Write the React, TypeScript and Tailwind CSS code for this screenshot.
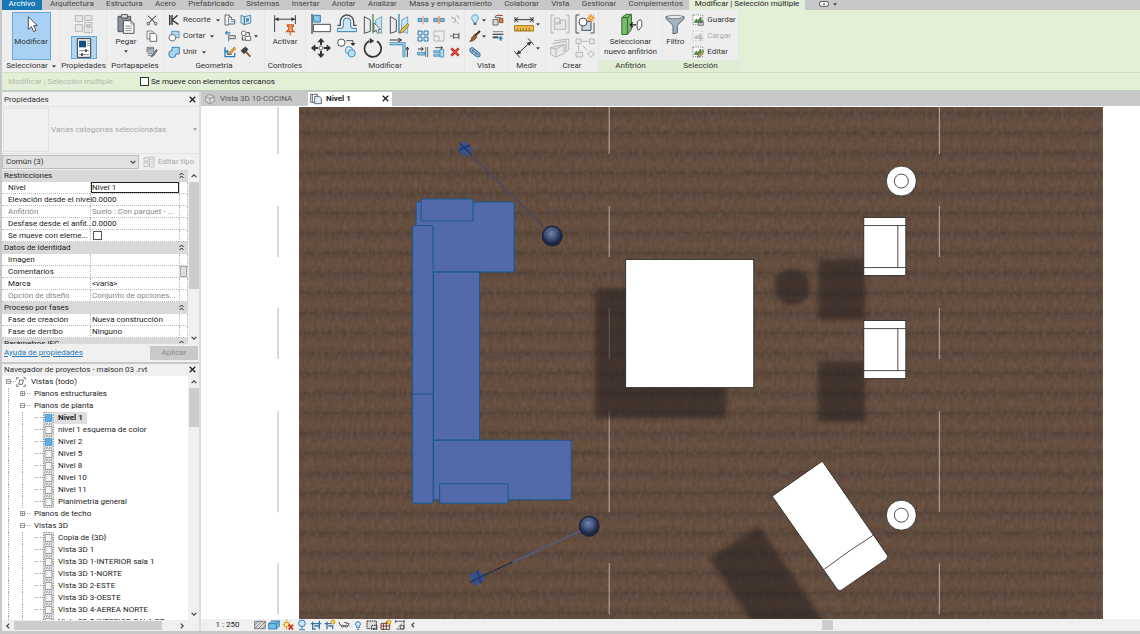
import type { ReactNode } from 'react';
import { clsx } from 'clsx';

interface IconProps {
  children: ReactNode;
  size?: 'sm' | 'lg' | 'xl';
  faded?: boolean;
}

// lg icons are drawn on a 60 grid, sm icons on a 36 grid
function Icon({ children, size = 'sm', faded }: IconProps) {
  return (
    <svg
      viewBox={size === 'sm' ? '0 0 36 36' : '0 0 60 60'}
      fill="none"
      stroke="#4b5157"
      strokeWidth="3"
      className={clsx(
        'shrink-0',
        size === 'sm' && 'w-3 h-3',
        size === 'lg' && 'w-5 h-5',
        size === 'xl' && 'w-6 h-6',
        faded && 'opacity-35 grayscale'
      )}
    >
      {children}
    </svg>
  );
}

function Caret() {
  return (
    <svg viewBox="0 0 10 6" className="w-1 h-[3px] shrink-0" fill="#444">
      <path d="M0 0h10L5 6z" />
    </svg>
  );
}

function CloseIcon() {
  return (
    <svg viewBox="0 0 10 10" className="w-[7px] h-[7px]" stroke="#222" strokeWidth="1.8">
      <path d="M1 1l8 8M9 1l-8 8" />
    </svg>
  );
}

function Chevron({ dir }: { dir: 'up' | 'down' | 'left' | 'right' }) {
  const paths = {
    up: 'M1 7l4-4 4 4',
    down: 'M1 3l4 4 4-4',
    left: 'M7 1L3 5l4 4',
    right: 'M3 1l4 4-4 4',
  };
  return (
    <svg viewBox="0 0 10 10" className="w-[6px] h-[6px]" fill="none" stroke="#444" strokeWidth="2">
      <path d={paths[dir]} />
    </svg>
  );
}

const icons = {
  cursor: (
    <Icon size="lg">
      <path d="M22 8v38l9-8 7 15 7-4-7-14h11z" fill="#fff" stroke="#333" strokeWidth="2.5" />
    </Icon>
  ),
  typeProps: (
    <Icon size="lg" faded>
      <path d="M4 5h22v18H4zM4 32h22v20H4zM32 5h22v14H32z" fill="#ddd" />
      <path d="M32 26h22v30H32z" fill="#fff" />
      <path d="M37 32h12v8H37z" fill="#999" />
      <path d="M37 46h12M37 51h12" strokeWidth="2" />
    </Icon>
  ),
  properties: (
    <Icon size="lg">
      <path d="M10 2h40v56H10z" fill="#fff" stroke="#333" />
      <path d="M15 8h21v20H15z" fill="#174f80" stroke="none" />
      <path d="M39 9h8M39 16h8M39 23h8M15 38h30M15 50h30" strokeWidth="2" />
      <path d="M36 34v8M24 46v8" stroke="#111" strokeWidth="4" />
    </Icon>
  ),
  paste: (
    <Icon size="lg">
      <path d="M6 7h38v46H6z" fill="#8d9299" stroke="#555b63" />
      <path d="M16 2h18v10H16z" fill="#e6e6e6" />
      <path d="M22 20h23l9 9v29H22z" fill="#fff" />
      <path d="M45 20v10h9M28 36h19M28 43h19M28 50h19" strokeWidth="2" />
    </Icon>
  ),
  cut: (
    <Icon>
      <path d="M6 5l21 21M30 5L9 26" stroke="#222" />
      <circle cx="7" cy="29" r="4" />
      <circle cx="29" cy="29" r="4" />
    </Icon>
  ),
  copyClip: (
    <Icon>
      <path d="M3 3h16l4 4v20H3z" fill="#eee" strokeWidth="2" />
      <path d="M12 10h14l6 6v18H12z" fill="#fff" strokeWidth="2.5" />
    </Icon>
  ),
  match: (
    <Icon>
      <path d="M3 4h20v14H3zM5 8h16M5 12h16M5 23h13M5 28h10" fill="#ddd" strokeWidth="2" />
      <path d="M32 10L19 25l-4 8 8-4 11-16z" fill="#5b86a9" strokeWidth="2" />
    </Icon>
  ),
  cope: (
    <Icon>
      <path d="M5 3v30M12 3v30M12 18L29 4M12 18l19 13" stroke="#333" strokeWidth="4" />
      <path d="M4 7h9M4 14h9M4 21h9M4 28h9" strokeWidth="2" />
    </Icon>
  ),
  cutGeom: (
    <Icon>
      <path d="M11 4h22v19H11z" fill="#b4daf0" stroke="#4a84ae" strokeWidth="2.5" />
      <circle cx="13" cy="23" r="10" fill="#fff" strokeWidth="2.5" />
    </Icon>
  ),
  joinGeom: (
    <Icon>
      <path d="M12 4h22v20H24a11 11 0 1 1-12-11z" fill="#a5d4ef" stroke="#28709e" strokeWidth="2.5" />
    </Icon>
  ),
  wallOpening: (
    <Icon>
      <path d="M3 3h13v6h6v8h10v13H14v3H3z" fill="#f7f7f7" strokeWidth="2.5" />
      <path d="M14 9v21" strokeWidth="2" />
      <path d="M20 23h14" stroke="#4d93c5" />
    </Icon>
  ),
  splitFace: (
    <Icon>
      <path d="M3 4l10 4v24L3 27zM13 8l19-4v23l-19 5z" fill="#d9eaf6" stroke="#39779f" strokeWidth="2.5" />
      <path d="M18 13l9-2v11l-9 4z" fill="#489bd1" stroke="none" />
    </Icon>
  ),
  beams: (
    <Icon>
      <path d="M14 17h20v9H14z" fill="#ddd" strokeWidth="2.5" />
      <path d="M3 7h16M8 2v10M3 12h16M14 26v8" stroke="#3c86b9" />
    </Icon>
  ),
  wallJoin: (
    <Icon>
      <circle cx="11" cy="10" r="7" fill="#fff" strokeWidth="2.5" />
      <path d="M16 19h16v12H16z" fill="#fff" strokeWidth="2.5" />
      <path d="M7 19v11h7M20 8h8v8" stroke="#222" strokeWidth="2.5" />
    </Icon>
  ),
  paint: (
    <Icon>
      <path d="M3 4v28h29V21M11 12v13h12M3 12l8 8" stroke="#277eb0" strokeWidth="4" />
      <path d="M31 3L16 19l-3 7 8-3L35 8z" fill="#e9a63c" stroke="#9a6415" strokeWidth="2" />
    </Icon>
  ),
  hammer: (
    <Icon>
      <path d="M17 17l14 15" stroke="#8b4a20" strokeWidth="5" />
      <path d="M3 14L16 3l8 7-12 13z" fill="#444" stroke="#222" strokeWidth="2" />
    </Icon>
  ),
  activate: (
    <Icon size="xl">
      <path d="M4 8v42M56 8v22M4 18h52" stroke="#444" strokeWidth="2.5" />
      <path d="M5 18l9-5v10zM55 18l-9-5v10z" fill="#333" stroke="none" />
      <path d="M36 32h15v4h-3v8l5 5H34l5-5v-8h-3z" fill="#f5a66d" stroke="#c95f25" />
      <path d="M43 49v9" stroke="#c95f25" />
    </Icon>
  ),
  align: (
    <Icon size="lg">
      <path d="M3 0v60" strokeWidth="4" />
      <path d="M7 4h21v20H7z" fill="#8dcaf0" stroke="#337fac" />
      <path d="M7 31h51v22H7z" fill="#fff" />
    </Icon>
  ),
  offset: (
    <Icon size="lg">
      <path d="M1 53h58V43H47q-6 0-6-7V23a11 11 0 0 0-22 0v13q0 7-6 7H1z" fill="#cfe7f5" stroke="#3781ad" strokeWidth="3" />
      <path d="M1 34h9V23a20 20 0 0 1 40 0v11h9" strokeWidth="4" />
    </Icon>
  ),
  mirrorPick: (
    <Icon size="lg">
      <path d="M4 8l18 10v34L4 58z" fill="#ededed" />
      <path d="M56 8L38 18v34l18 6z" fill="#c6e4f5" stroke="#79a7c2" />
      <path d="M30 0v58" stroke="#3c9342" strokeWidth="4" />
      <path d="M33 27v27l6-6 5 11 5-3-5-10h9z" fill="#fff" stroke="#333" strokeWidth="2" />
    </Icon>
  ),
  mirrorDraw: (
    <Icon size="lg">
      <path d="M4 8l18 10v34L4 58z" fill="#ededed" />
      <path d="M56 8L38 18v34l18 6z" fill="#c6e4f5" stroke="#79a7c2" />
      <path d="M30 0v58" stroke="#3789b8" strokeWidth="4" />
      <path d="M56 28L36 47l-4 11 11-4 17-20z" fill="#ebbd44" stroke="#6b5421" strokeWidth="2" />
    </Icon>
  ),
  move: (
    <Icon size="lg">
      <path d="M30 5v17M30 38v17M5 30h17M38 30h17" stroke="#333" strokeWidth="6" />
      <path d="M30 0l11 13H19zM30 60l11-13H19zM0 30l13-11v22zM60 30L47 19v22z" fill="#333" stroke="none" />
      <path d="M25 25h10v10H25z" fill="#fff" strokeWidth="2" />
    </Icon>
  ),
  copy: (
    <Icon size="lg">
      <circle cx="13" cy="14" r="11" fill="#fff" />
      <path d="M28 8h20v9" />
      <path d="M40 15h16l-8 9z" fill="#333" stroke="none" />
      <circle cx="36" cy="37" r="11" fill="#d9effb" stroke="#3f91c1" />
      <circle cx="44" cy="46" r="11" fill="#b7dff5" stroke="#3f91c1" />
    </Icon>
  ),
  rotate: (
    <Icon size="lg">
      <path d="M19 9a25 25 0 1 0 23 1" stroke="#333" strokeWidth="5" />
      <path d="M20 0v17l14-8z" fill="#333" stroke="none" />
    </Icon>
  ),
  trim: (
    <Icon size="lg">
      <path d="M2 6h35M27 0l11 6-11 6M55 57V28M49 36l6-9 6 9" stroke="#333" />
      <path d="M2 17h43v41" stroke="#3c87b6" strokeWidth="9" />
      <path d="M2 17h43v41" stroke="#a9d6ef" strokeWidth="4" />
    </Icon>
  ),
  splitElem: (
    <Icon>
      <path d="M3 13h11v10H3zM22 13h11v10H22z" fill="#79bce5" stroke="#33739d" strokeWidth="2" />
      <path d="M18 5v26" stroke="#d56430" strokeWidth="2" />
    </Icon>
  ),
  splitGap: (
    <Icon>
      <path d="M2 13h11v10H2zM23 13h11v10H23z" fill="#79bce5" stroke="#33739d" strokeWidth="2" />
      <path d="M16 7v22M20 7v22" stroke="#d56430" strokeWidth="2" />
    </Icon>
  ),
  unpin: (
    <Icon faded>
      <path d="M5 5l25 25M20 6h9v10M7 12h12v12h-8" />
    </Icon>
  ),
  array: (
    <Icon>
      <path d="M3 3h12v12H3zM21 3h12v12H21zM3 21h12v12H3zM21 21h12v12H21z" fill="#d6ecf8" stroke="#2d7ba9" />
    </Icon>
  ),
  scale: (
    <Icon faded>
      <path d="M3 3h30v30H3zM3 18h15v15" fill="#eee" />
    </Icon>
  ),
  pin: (
    <Icon>
      <path d="M3 18h11M14 9v18M14 13h14v10H14M30 8v20" strokeWidth="2.5" />
    </Icon>
  ),
  extend: (
    <Icon>
      <path d="M32 3v30M26 3v30" strokeWidth="2.5" />
      <path d="M3 9h15M13 4l6 5-6 5" stroke="#333" />
      <path d="M2 19h21v8H2z" fill="#8cc6e9" stroke="#3c87b6" strokeWidth="2.5" />
    </Icon>
  ),
  extendMulti: (
    <Icon>
      <path d="M2 14h18v6H2zM2 25h18v6H2z" fill="#83c0e5" stroke="#3c87b6" strokeWidth="2" />
      <path d="M21 10h11v23H21z" fill="#b9dcf0" stroke="#3c87b6" strokeWidth="2.5" />
      <path d="M6 5h22M23 1l6 4-6 4" />
    </Icon>
  ),
  remove: (
    <Icon>
      <path d="M7 7l22 22M29 7L7 29" stroke="#a02622" strokeWidth="8" />
      <path d="M8 8l20 20M28 8L8 28" stroke="#ef4d44" strokeWidth="4" />
    </Icon>
  ),
  bulb: (
    <Icon>
      <path d="M18 2a10 10 0 0 0-7 17l3 7h8l3-7a10 10 0 0 0-7-17z" fill="#c2e6fc" stroke="#448cb9" strokeWidth="2.5" />
      <path d="M14 30h8" strokeWidth="5" />
    </Icon>
  ),
  brush: (
    <Icon>
      <path d="M33 3L18 17" stroke="#3d3026" strokeWidth="6" />
      <path d="M17 13l7 8-6 7q-6 7-16 6 6-4 6-11z" fill="#9a5c2b" stroke="#5f371a" strokeWidth="2" />
    </Icon>
  ),
  chain: (
    <Icon>
      <path d="M3 8l7-4 23 18v9l-9 2L3 17z" fill="#8fbfdf" stroke="#285f8a" strokeWidth="2.5" />
      <path d="M8 11l22 16M14 7l-5 12M25 17l-5 12" strokeWidth="2" />
    </Icon>
  ),
  boxes: (
    <Icon>
      <path d="M3 17h15v16H3zM9 11h16v15" fill="#ddd" strokeWidth="2.5" />
      <path d="M22 13h11v13H22z" fill="#df7d3b" stroke="#713d23" strokeWidth="2" />
      <path d="M8 9q6-8 24-4" stroke="#713d23" />
    </Icon>
  ),
  linework: (
    <Icon>
      <path d="M2 5h32" strokeWidth="2" />
      <path d="M2 13h32" strokeWidth="4" />
      <path d="M2 22h17" strokeWidth="6" />
      <path d="M26 18v14M20 25h12" stroke="#3487c4" strokeWidth="5" />
    </Icon>
  ),
  measure: (
    <Icon size="lg">
      <path d="M3 17h54M3 9v16M57 9v16M13 10L4 17l9 7M47 10l9 7-9 7" stroke="#333" />
      <path d="M1 35h58v16H1z" fill="#f2bd43" stroke="#a3771b" />
      <path d="M10 42v9M19 42v9M28 42v9M37 42v9M46 42v9" strokeWidth="2" />
    </Icon>
  ),
  dimension: (
    <Icon size="lg">
      <path d="M9 49L51 11M1 40l17 19M42 1l17 19" stroke="#333" />
      <path d="M9 49l4-13 9 10zM51 11l-4 13-9-10z" fill="#333" stroke="none" />
    </Icon>
  ),
  group: (
    <Icon size="lg" faded>
      <path d="M12 3H3v54h9M48 3h9v54h-9M14 12h15v15H14zM31 18h16v28H14V30h17z" fill="#ddd" />
    </Icon>
  ),
  createGroup: (
    <Icon size="lg">
      <path d="M13 3H3v54h10M46 57h11V26" />
      <path d="M24 22h24v27H20z" fill="#cbd9e4" />
      <circle cx="24" cy="24" r="12" fill="#fff" />
      <path d="M48 0v25M36 12h24M39 4l18 17M57 4L39 21" stroke="#ed7b27" />
      <circle cx="48" cy="12" r="6" fill="#ffd64d" stroke="#e8922c" />
    </Icon>
  ),
  parts: (
    <Icon size="lg" faded>
      <path d="M14 8l42-5v32l-8 8M2 29l40-10v28L18 57 2 50zM2 29l16 5v23M18 34l24-15M8 17l40-8v34" fill="#ddd" />
    </Icon>
  ),
  assembly: (
    <Icon size="lg" faded>
      <path d="M3 3h15v14H3zM43 3h15v14H43zM3 43h20v14H3zM48 38l10 10-10 10-10-10zM22 10h17M11 20v19M23 23l15 15" fill="#ddd" />
    </Icon>
  ),
  host: (
    <Icon size="xl">
      <path d="M7 14l10-8h14v38L21 56H7z" fill="#7cbb6c" stroke="#316b2f" strokeWidth="2.5" />
      <path d="M7 14h14v42M21 14L31 6" stroke="#316b2f" strokeWidth="2.5" />
      <path d="M28 32h15M35 26l-7 6 7 6" stroke="#222" />
      <path d="M46 24l7-5q5 0 4 17l-7 9q-7 2-4-21z" fill="#fff" strokeWidth="2.5" />
    </Icon>
  ),
  filter: (
    <Icon size="lg">
      <path d="M3 8h54v6L37 34v22l-13 4V34L3 14z" fill="#a3b2bf" stroke="#536371" />
      <ellipse cx="30" cy="9" rx="25" ry="5" fill="#e5eaee" stroke="#536371" strokeWidth="2" />
    </Icon>
  ),
};

function SelectionIcon({ kind }: { kind: 'save' | 'load' | 'edit' }) {
  return (
    <Icon faded={kind === 'load'}>
      <path d="M3 3h29v29H3z" strokeDasharray="4 3" strokeWidth="2" fill="#fff" />
      <path d="M7 25l6-10 5 5 8-11 3 17z" fill="#4d9543" stroke="#31662c" strokeWidth="2" />
      {kind === 'save' && <path d="M19 21h15v13H19zM23 21v5h7v-5" fill="#ccc" strokeWidth="2" />}
      {kind === 'load' && <path d="M26 19v15M20 26h14" />}
      {kind === 'edit' && <path d="M34 13L19 27l-2 7 7-2 11-14z" fill="#edb248" strokeWidth="2" />}
    </Icon>
  );
}

const tabs = [
  'Arquitectura',
  'Estructura',
  'Acero',
  'Prefabricado',
  'Sistemas',
  'Insertar',
  'Anotar',
  'Analizar',
  'Masa y emplazamiento',
  'Colaborar',
  'Vista',
  'Gestionar',
  'Complementos',
];

function MenuTabs() {
  return (
    <nav className="flex h-[10px] bg-[#c8c8c8] text-[#444] leading-[7px]">
      <button className="w-10 pb-[3px] bg-[#1979b4] text-white">Archivo</button>
      <div className="flex w-[647px] justify-between pb-[3px] pl-2 pr-[6px]">
        {tabs.map((tab) => (
          <button key={tab}>{tab}</button>
        ))}
      </div>
      <button className="w-[116px] pb-[3px] bg-[#e4efd8] text-[#222]">Modificar | Selección múltiple</button>
      <button aria-label="Minimizar" className="flex items-center gap-1 h-2 pl-[14px]">
        <svg viewBox="0 0 30 18" className="w-[10px] h-[6px]" fill="#fff" stroke="#555" strokeWidth="3">
          <rect x="2" y="2" width="26" height="14" rx="4" />
          <path d="M15 6l4 5h-8z" fill="#333" stroke="none" />
        </svg>
        <Caret />
      </button>
    </nav>
  );
}

interface PanelProps {
  label: string;
  width: string;
  children: ReactNode;
  caret?: boolean;
  context?: boolean;
}

function Panel({ label, width, children, caret, context }: PanelProps) {
  return (
    <section className={clsx('flex flex-col shrink-0 border-r border-[#e6e6e6]', width)}>
      <div className="flex grow justify-center bg-[#eeeeee] pt-[2px]">{children}</div>
      <div
        className={clsx(
          'flex items-center justify-center gap-1 h-3 leading-3',
          context ? 'bg-[#e1ecd4]' : 'bg-[#eeeeee]'
        )}
      >
        {label}
        {caret && <Caret />}
      </div>
    </section>
  );
}

function ToolButton({ children, name }: { children: ReactNode; name: string }) {
  return (
    <button aria-label={name} className="flex items-center justify-center">
      {children}
    </button>
  );
}

function LabelButton({ icon, text, caret, disabled }: { icon: ReactNode; text: string; caret?: boolean; disabled?: boolean }) {
  return (
    <button disabled={disabled} className={clsx('flex items-center gap-[3px] h-4', disabled && 'text-[#aaa]')}>
      {icon}
      {text}
      {caret && <span className="pl-[2px]"><Caret /></span>}
    </button>
  );
}

function Ribbon() {
  return (
    <div className="flex h-[63px] bg-[#e4efd8] border-b border-[#d3dcc9] text-[#333] leading-[10px]">
      <Panel label="Seleccionar" width="w-[59px]" caret>
        <button className="flex flex-col items-center gap-[3px] w-[39px] h-12 pt-px bg-[#a9d1f3] border border-[#6ba6d5]">
          {icons.cursor}
          Modificar
        </button>
      </Panel>
      <Panel label="Propiedades" width="w-[46px]">
        <div className="flex flex-col items-center gap-[2px] pt-[2px]">
          <ToolButton name="Propiedades de tipo">{icons.typeProps}</ToolButton>
          <button aria-label="Propiedades" className="flex items-center justify-center w-[26px] h-[23px] bg-[#b0d5f3] border border-[#6ba6d5]">
            {icons.properties}
          </button>
        </div>
      </Panel>
      <Panel label="Portapapeles" width="w-[57px]">
        <div className="flex gap-[10px] pl-1">
          <button className="flex flex-col items-center gap-[3px] h-12 pt-[2px]">
            {icons.paste}
            Pegar
            <Caret />
          </button>
          <div className="grid grid-rows-3 h-12">
            <ToolButton name="Cortar al portapapeles">{icons.cut}</ToolButton>
            <ToolButton name="Copiar al portapapeles">{icons.copyClip}</ToolButton>
            <ToolButton name="Igualar propiedades">{icons.match}</ToolButton>
          </div>
        </div>
      </Panel>
      <Panel label="Geometría" width="w-[101px]">
        <div className="flex w-full pl-1">
          <div className="flex flex-col w-[54px]">
            <LabelButton icon={icons.cope} text="Recorte" caret />
            <LabelButton icon={icons.cutGeom} text="Cortar" caret />
            <LabelButton icon={icons.joinGeom} text="Unir" caret />
          </div>
          <div className="grid grid-cols-[16px_16px_8px] grid-rows-3 h-12 items-center">
            <ToolButton name="Abertura">{icons.wallOpening}</ToolButton>
            <ToolButton name="Dividir cara">{icons.splitFace}</ToolButton>
            <span />
            <ToolButton name="Uniones de viga">{icons.beams}</ToolButton>
            <ToolButton name="Uniones de muro">{icons.wallJoin}</ToolButton>
            <Caret />
            <ToolButton name="Pintura">{icons.paint}</ToolButton>
            <ToolButton name="Derribar">{icons.hammer}</ToolButton>
          </div>
        </div>
      </Panel>
      <Panel label="Controles" width="w-[41px]">
        <button className="flex flex-col items-center gap-px h-12">
          {icons.activate}
          Activar
        </button>
      </Panel>
      <Panel label="Modificar" width="w-[159px]">
        <div className="flex gap-[3px]">
          <div className="grid grid-cols-4 grid-rows-2 w-[104px] h-12">
            <ToolButton name="Alinear">{icons.align}</ToolButton>
            <ToolButton name="Desfase">{icons.offset}</ToolButton>
            <ToolButton name="Reflejar eje">{icons.mirrorPick}</ToolButton>
            <ToolButton name="Dibujar eje">{icons.mirrorDraw}</ToolButton>
            <ToolButton name="Mover">{icons.move}</ToolButton>
            <ToolButton name="Copiar">{icons.copy}</ToolButton>
            <ToolButton name="Rotar">{icons.rotate}</ToolButton>
            <ToolButton name="Recortar esquina">{icons.trim}</ToolButton>
          </div>
          <div className="grid grid-cols-3 grid-rows-3 w-12 h-12">
            <ToolButton name="Dividir">{icons.splitElem}</ToolButton>
            <ToolButton name="Dividir con hueco">{icons.splitGap}</ToolButton>
            <ToolButton name="Desbloquear">{icons.unpin}</ToolButton>
            <ToolButton name="Matriz">{icons.array}</ToolButton>
            <ToolButton name="Escala">{icons.scale}</ToolButton>
            <ToolButton name="Bloquear">{icons.pin}</ToolButton>
            <ToolButton name="Extender uno">{icons.extend}</ToolButton>
            <ToolButton name="Extender varios">{icons.extendMulti}</ToolButton>
            <ToolButton name="Borrar">{icons.remove}</ToolButton>
          </div>
        </div>
      </Panel>
      <Panel label="Vista" width="w-[43px]">
        <div className="grid grid-cols-[14px_9px_14px] grid-rows-3 h-12 items-center">
          <ToolButton name="Ocultar">{icons.bulb}</ToolButton>
          <Caret />
          <ToolButton name="Caja de sección">{icons.boxes}</ToolButton>
          <ToolButton name="Modificar gráficos">{icons.brush}</ToolButton>
          <Caret />
          <ToolButton name="Trabajo de líneas">{icons.linework}</ToolButton>
          <ToolButton name="Desplazar">{icons.chain}</ToolButton>
        </div>
      </Panel>
      <Panel label="Medir" width="w-[38px]">
        <div className="grid grid-cols-[24px_6px] grid-rows-2 h-12 items-center">
          <ToolButton name="Medir">{icons.measure}</ToolButton>
          <Caret />
          <ToolButton name="Cota alineada">{icons.dimension}</ToolButton>
          <Caret />
        </div>
      </Panel>
      <Panel label="Crear" width="w-[53px]">
        <div className="grid grid-cols-2 grid-rows-2 w-[50px] h-12">
          <ToolButton name="Grupo">{icons.group}</ToolButton>
          <ToolButton name="Crear grupo">{icons.createGroup}</ToolButton>
          <ToolButton name="Piezas">{icons.parts}</ToolButton>
          <ToolButton name="Montaje">{icons.assembly}</ToolButton>
        </div>
      </Panel>
      <Panel label="Anfitrión" width="w-[64px]" context>
        <button className="flex flex-col items-center gap-px h-12">
          {icons.host}
          <span>Seleccionar<br />nuevo anfitrión</span>
        </button>
      </Panel>
      <Panel label="Selección" width="w-[76px]" context>
        <div className="flex gap-[7px]">
          <button className="flex flex-col items-center gap-[3px] h-12 pt-[2px]">
            {icons.filter}
            Filtro
          </button>
          <div className="flex flex-col">
            <LabelButton icon={<SelectionIcon kind="save" />} text="Guardar" />
            <LabelButton icon={<SelectionIcon kind="load" />} text="Cargar" disabled />
            <LabelButton icon={<SelectionIcon kind="edit" />} text="Editar" />
          </div>
        </div>
      </Panel>
    </div>
  );
}

function OptionsBar() {
  return (
    <div className="flex items-center h-[19px] pt-px bg-[#e4efd8] border-b-2 border-[#c5c9c1]">
      <span className="w-[138px] pl-[6px] text-[#b0b8a6]">Modificar | Selección múltiple</span>
      <label className="flex items-center gap-[2px] text-[#222]">
        <input type="checkbox" className="appearance-none w-[9px] h-[9px] bg-white border border-[#333]" />
        Se mueve con elementos cercanos
      </label>
    </div>
  );
}

interface Row {
  name: string;
  value?: string;
  kind?: 'group' | 'check';
  active?: boolean;
  disabled?: boolean;
  browse?: boolean;
}

const rows: Row[] = [
  { name: 'Restricciones', kind: 'group' },
  { name: 'Nivel', value: 'Nivel 1', active: true },
  { name: 'Elevación desde el nivel', value: '0.0000' },
  { name: 'Anfitrión', value: 'Suelo : Con parquet - ...', disabled: true },
  { name: 'Desfase desde el anfit...', value: '0.0000' },
  { name: 'Se mueve con eleme...', kind: 'check' },
  { name: 'Datos de identidad', kind: 'group' },
  { name: 'Imagen', value: '' },
  { name: 'Comentarios', value: '', browse: true },
  { name: 'Marca', value: '<varía>' },
  { name: 'Opción de diseño', value: 'Conjunto de opciones...', disabled: true },
  { name: 'Proceso por fases', kind: 'group' },
  { name: 'Fase de creación', value: 'Nueva construcción' },
  { name: 'Fase de derribo', value: 'Ninguno' },
  { name: 'Parámetros IFC', kind: 'group' },
];

function PropertyRow({ row }: { row: Row }) {
  if (row.kind === 'group') {
    return (
      <tr className="h-3 bg-[#d9d9d9] text-[#222]">
        <th colSpan={3} className="p-0 pl-[2px] text-left font-normal">
          <div className="flex items-center justify-between pr-1">
            {row.name}
            <svg viewBox="0 0 10 14" className="w-[5px] h-[7px]" fill="none" stroke="#222" strokeWidth="2">
              <path d="M1 6l4-4 4 4M1 12l4-4 4 4" />
            </svg>
          </div>
        </th>
      </tr>
    );
  }
  return (
    <tr className={clsx('h-3', row.disabled ? 'text-[#888]' : 'text-[#222]')}>
      <th className="p-0 pl-[6px] text-left font-normal whitespace-nowrap border-b border-dotted border-[#bbb]">
        {row.name}
      </th>
      <td className="p-0 border-b border-l border-dotted border-[#bbb]">
        {row.kind === 'check' ? (
          <input type="checkbox" aria-label={row.name} className="block appearance-none ml-[2px] w-[9px] h-[9px] bg-white border border-[#555]" />
        ) : (
          <input
            aria-label={row.name}
            defaultValue={row.value}
            disabled={row.disabled}
            className={clsx('block w-full h-[11px] bg-transparent outline-none', row.active ? 'border border-[#222]' : 'pl-px')}
          />
        )}
      </td>
      <td className="p-0 border-b border-x border-dotted border-[#bbb]">
        {row.browse && <button aria-label="Examinar" className="block w-full h-[11px] bg-[#ddd] border border-[#aaa]" />}
      </td>
    </tr>
  );
}

function VScroll({ thumb }: { thumb: string }) {
  return (
    <div className="flex flex-col items-center shrink-0 w-[11px] bg-[#f0f0f0]">
      <button aria-label="Subir" className="flex items-center justify-center h-3"><Chevron dir="up" /></button>
      <div className={clsx('w-[10px] bg-[#cdcdcd]', thumb)} />
      <button aria-label="Bajar" className="flex items-center justify-center h-3 mt-auto"><Chevron dir="down" /></button>
    </div>
  );
}

function PaletteTitle({ text }: { text: string }) {
  return (
    <div className="flex items-center justify-between shrink-0 h-3 pl-[2px] pr-[3px] bg-[#f0f0f0] text-[#333]">
      {text}
      <button aria-label={`Cerrar ${text}`}><CloseIcon /></button>
    </div>
  );
}

function PropertiesPalette() {
  return (
    <section className="flex flex-col shrink-0 pt-[2px] bg-[#f0f0f0]">
      <PaletteTitle text="Propiedades" />
      <button className="flex items-center h-12 border-y border-[#e3e3e3] text-[#a8a8a8]">
        <span className="w-[46px] h-[44px] mx-px border border-[#e2e2e2]" />
        <span className="grow pl-px text-left">Varias categorías seleccionadas</span>
        <span className="pr-[2px] opacity-50"><Caret /></span>
      </button>
      <div className="flex items-center gap-1 h-4 text-[#333]">
        <div className="relative w-[137px]">
          <select aria-label="Filtro de propiedades" className="block appearance-none w-full h-[14px] pl-[3px] bg-[#e1e1e1] border border-[#bdbdbd]">
            <option>Común (3)</option>
          </select>
          <span className="absolute right-[3px] top-1 pointer-events-none"><Chevron dir="down" /></span>
        </div>
        <button disabled className="flex items-center gap-[3px] whitespace-nowrap text-[#aaa]">
          <Icon faded>
            <path d="M3 5h12v10H3zM3 19h12v13H3zM19 3h14v30H19zM22 10h8M22 17h8M22 24h8" strokeWidth="2.5" />
          </Icon>
          Editar tipo
        </button>
      </div>
      <div className="flex h-[174px] overflow-hidden">
        <div className="grow overflow-hidden bg-white">
          <table className="table-fixed w-full border-separate border-spacing-0 leading-[11px]">
            <colgroup>
              <col className="w-[88px]" />
              <col />
              <col className="w-[9px]" />
            </colgroup>
            <tbody>
              {rows.map((row) => (
                <PropertyRow key={row.name} row={row} />
              ))}
            </tbody>
          </table>
        </div>
        <VScroll thumb="h-[107px]" />
      </div>
      <div className="flex items-center justify-between h-[18px] pl-[2px] pr-px">
        <a href="#ayuda" className="text-[#2a7ab9] underline">Ayuda de propiedades</a>
        <button disabled className="w-12 h-[14px] bg-[#c9c9c9] text-[#8c8c8c]">Aplicar</button>
      </div>
    </section>
  );
}

interface TreeNode {
  label: string;
  depth: 0 | 1 | 2;
  open?: boolean;
  filled?: boolean;
  selected?: boolean;
}

const tree: TreeNode[] = [
  { label: 'Vistas (todo)', depth: 0, open: true },
  { label: 'Planos estructurales', depth: 1, open: false },
  { label: 'Planos de planta', depth: 1, open: true },
  { label: 'Nivel 1', depth: 2, filled: true, selected: true },
  { label: 'nivel 1 esquema de color', depth: 2 },
  { label: 'Nivel 2', depth: 2, filled: true },
  { label: 'Nivel 5', depth: 2 },
  { label: 'Nivel 8', depth: 2 },
  { label: 'Nivel 10', depth: 2 },
  { label: 'Nivel 11', depth: 2 },
  { label: 'Planimetría general', depth: 2 },
  { label: 'Planos de techo', depth: 1, open: false },
  { label: 'Vistas 3D', depth: 1, open: true },
  { label: 'Copia de {3D}', depth: 2 },
  { label: 'Vista 3D 1', depth: 2 },
  { label: 'Vista 3D 1-INTERIOR sala 1', depth: 2 },
  { label: 'Vista 3D 1-NORTE', depth: 2 },
  { label: 'Vista 3D 2-ESTE', depth: 2 },
  { label: 'Vista 3D 3-OESTE', depth: 2 },
  { label: 'Vista 3D 4-AEREA NORTE', depth: 2 },
  { label: 'Vista 3D 5-INTERIOR SALA PB', depth: 2 },
];

function Toggle({ open }: { open?: boolean }) {
  return (
    <svg viewBox="0 0 15 15" className="w-[5px] h-[5px] shrink-0" fill="#fff" stroke="#888" strokeWidth="3">
      <path d="M1 1h13v13H1zM4 7.5h7" />
      {!open && <path d="M7.5 4v7" />}
    </svg>
  );
}

function TreeRow({ node }: { node: TreeNode }) {
  return (
    <li className="flex items-center h-3 pl-[4px] whitespace-nowrap">
      {node.depth === 0 && (
        <>
          <Toggle open={node.open} />
          <span className="w-[5px] border-t border-dotted border-[#aaa]" />
          <svg viewBox="0 0 30 30" className="w-[10px] h-[10px] mr-[5px]" fill="none" stroke="#555" strokeWidth="2.5">
            <path d="M8 2H2v6M22 2h6v6M8 28H2v-6M22 28h6v-6M11 9h11l-3 13H8z" />
          </svg>
        </>
      )}
      {node.depth === 1 && (
        <>
          <span className="w-[12px] h-3 ml-[2px] border-l border-dotted border-[#aaa]" />
          <Toggle open={node.open} />
          <span className="w-[5px] mr-[2px] border-t border-dotted border-[#aaa]" />
        </>
      )}
      {node.depth === 2 && (
        <>
          <span className="w-[12px] h-3 ml-[2px] border-l border-dotted border-[#aaa]" />
          <span className="w-[13px] h-3 ml-[2px] border-l border-dotted border-[#aaa]" />
          <span className="w-[8px] border-t border-dotted border-[#aaa]" />
          <svg viewBox="0 0 33 36" className="w-[11px] h-3" fill="none" stroke="#666" strokeWidth="2.5">
            <path d="M2 2h29v32H2z" strokeDasharray="4 3" />
            <path d="M6 7h21v22H6z" fill={node.filled ? '#61ace0' : '#f5f5f5'} stroke={node.filled ? '#4b91c2' : '#777'} />
          </svg>
        </>
      )}
      <button className={clsx('h-3 px-1', node.depth < 2 && 'pl-0', node.depth === 1 && 'pl-[2px]', node.selected && 'font-bold bg-[#dedede]')}>
        {node.label}
      </button>
    </li>
  );
}

function ProjectBrowser() {
  return (
    <section className="flex flex-col grow min-h-0 border-t-2 border-[#c8c8c8]">
      <PaletteTitle text="Navegador de proyectos - maison 03 .rvt" />
      <div className="flex grow min-h-0 bg-white text-[#222]">
        <ul className="grow overflow-hidden leading-3">
          {tree.map((node) => (
            <TreeRow key={node.label} node={node} />
          ))}
        </ul>
        <VScroll thumb="h-[39px]" />
      </div>
      <div className="flex items-center shrink-0 h-[11px] pr-[11px] bg-[#f0f0f0]">
        <button aria-label="Izquierda" className="flex justify-center w-3"><Chevron dir="left" /></button>
        <div className="w-[148px] h-[9px] bg-[#cdcdcd]" />
        <button aria-label="Derecha" className="flex justify-center w-3 ml-auto"><Chevron dir="right" /></button>
      </div>
    </section>
  );
}

function DocTabs() {
  return (
    <div className="flex shrink-0 h-[14px] bg-[#c8c8c8] text-[#555]">
      <button className="flex items-center gap-1 w-[107px] pl-[3px]">
        <Icon>
          <path d="M5 11l12-7 14 7v14l-13 8L5 25zM5 11l13 7 13-7M18 18v15" fill="#ddd" stroke="#888" strokeWidth="2.5" />
        </Icon>
        Vista 3D 10-COCINA
      </button>
      <div className="flex items-center w-[84px] pl-[2px] pr-[3px] bg-white text-[#222]">
        <button className="flex items-center grow gap-1 font-bold">
          <Icon>
            <path d="M2 4h20v24H2zM7 4v24" fill="#fff" strokeWidth="2.5" />
            <path d="M14 10h13l7 6v16H14z" fill="#e3edf5" strokeWidth="2.5" />
          </Icon>
          Nivel 1
        </button>
        <button aria-label="Cerrar vista"><CloseIcon /></button>
      </div>
    </div>
  );
}

const gridLines = [278, 609, 939];
const chairs = [217, 320];

function Lamp({ cx, cy }: { cx: number; cy: number }) {
  return (
    <g>
      <circle cx={cx} cy={cy} r="10" fill="url(#lamp)" stroke="#1c2440" />
      <circle cx={cx} cy={cy} r="6" fill="none" stroke="#2c3b66" strokeDasharray="1 2" />
      <circle cx={cx} cy={cy} r="9" fill="none" stroke="#141c33" strokeDasharray="2 1" opacity="0.6" />
    </g>
  );
}

function FloorPlan() {
  return (
    <svg viewBox="201 106 939 513" preserveAspectRatio="xMinYMin slice" className="block w-full grow min-h-0 bg-white">
      <defs>
        <linearGradient id="board" x1="0" y1="0" x2="0" y2="1">
          <stop offset="0" stopColor="#57443a" />
          <stop offset="0.25" stopColor="#614a3b" />
          <stop offset="0.55" stopColor="#674d3c" />
          <stop offset="0.85" stopColor="#5e483a" />
          <stop offset="1" stopColor="#544137" />
        </linearGradient>
        <pattern id="plank" x="299" y="94" width="27" height="20" patternUnits="userSpaceOnUse">
          <rect width="27" height="20" fill="url(#board)" />
          <path d="M0 19q4-2 8 0t7-1 6 1 6 0" stroke="#43342b" fill="none" opacity="0.4" />
          <path d="M3 3q3 5 0 13M16 2q2 7-1 12M22 6q2 4 0 9" stroke="#443227" fill="none" opacity="0.18" />
          <path d="M9 5v7M19 4v6" stroke="#7d5841" opacity="0.18" />
        </pattern>
        <filter id="grain" x="0" y="0" width="100%" height="100%">
          <feTurbulence type="fractalNoise" baseFrequency="0.28 0.16" numOctaves="3" seed="4" />
          <feColorMatrix values="0 0 0 0 0.17  0 0 0 0 0.13  0 0 0 0 0.1  0.9 0 0 0 -0.33" />
        </filter>
        <filter id="soft" filterUnits="userSpaceOnUse" x="580" y="240" width="320" height="420">
          <feGaussianBlur stdDeviation="2.5" />
        </filter>
        <radialGradient id="lamp" cx="0.45" cy="0.35">
          <stop offset="0" stopColor="#7183ad" />
          <stop offset="0.6" stopColor="#435277" />
          <stop offset="1" stopColor="#1f2944" />
        </radialGradient>
        <clipPath id="floor">
          <rect x="299" y="107" width="804" height="512" />
        </clipPath>
      </defs>

      <rect x="299" y="107" width="803.5" height="512" fill="url(#plank)" />
      <rect x="299" y="107" width="803.5" height="512" filter="url(#grain)" />

      {gridLines.map((x) => (
        <path key={x} d={`M${x} 107v47m0 52v51m0 51v51m0 52v101m0 51v51`} stroke="#b9b0aa" fill="none" />
      ))}

      <g fill="#2a2422" opacity="0.6" filter="url(#soft)" clipPath="url(#floor)">
        <rect x="595" y="288" width="131" height="130" />
        <circle cx="792" cy="287" r="18" />
        <rect x="818" y="259" width="47" height="61" />
        <rect x="818" y="361" width="47" height="61" />
        <path d="M759 526l65 96-50 34-65-98z" />
      </g>

      <g fill="#fff" stroke="#222" strokeWidth="0.8">
        <rect x="625.5" y="259.5" width="128" height="128" />
        {chairs.map((y) => (
          <g key={y}>
            <rect x="863.5" y={y + 0.5} width="42" height="58" />
            <path d={`M863.5 ${y + 8.5}h42M863.5 ${y + 50.5}h42M897.5 ${y + 8.5}v42`} />
          </g>
        ))}
        <circle cx="901" cy="181" r="15" />
        <circle cx="901" cy="181" r="7" />
        <circle cx="901" cy="515" r="15" />
        <circle cx="901" cy="515" r="7" />
        <path d="M822 461l65 94q1 2-1 4l-45 31q-2 1-4-1l-65-93z" />
        <path d="M824 569q25-19 49-34" fill="none" />
      </g>

      {/* selected furniture */}
      <g fill="#5269aa" stroke="#17588c">
        <path d="M417 202h95q2 0 2 2v68h-98v-68q0-2 1-2z" />
        <rect x="421" y="199" width="52" height="22" rx="2" />
        <rect x="433" y="272" width="46.5" height="168" />
        <rect x="433" y="440" width="138" height="59.5" rx="2" />
        <rect x="412.5" y="225.5" width="20.5" height="277.5" rx="2" />
        <path d="M412.5 394h21" />
        <rect x="439.5" y="483.5" width="68.5" height="19.5" rx="1" />
      </g>
      <path d="M468 152l78 77" stroke="#454765" strokeWidth="1.2" />
      <path d="M480 577l104-48" stroke="#535b80" strokeWidth="1.5" />
      <path d="M480 577l32-15" stroke="#1d1f2a" />
      <g stroke="#1f376e" strokeWidth="1.5">
        <path d="M457 149l7-8 9 8-8 8z" fill="#38518b" stroke="none" />
        <path d="M459 143l13 12M459 150l11-5" />
        <path d="M469 575l10-5 6 9-10 7z" fill="#38518b" stroke="none" />
        <path d="M470 582l14-7M477 571l4 12" />
      </g>
      <Lamp cx={552} cy={236} />
      <Lamp cx={589} cy={526} />
    </svg>
  );
}

const viewControls: { name: string; icon: ReactNode }[] = [
  { name: 'Nivel de detalle', icon: <path d="M2 7h32v22H2zM2 18L13 7M2 29L24 7M13 29L34 8M24 29l10-10" fill="#ddd" strokeWidth="2" /> },
  { name: 'Estilo visual', icon: <path d="M2 14l9-8h23v16l-9 8H2zM2 14h23v16M25 14l9-8" fill="#75bfe7" stroke="#27779f" strokeWidth="2.5" /> },
  {
    name: 'Camino de sol',
    icon: (
      <>
        <path d="M14 1v32M1 17h25M5 7l19 20M24 7L4 28" stroke="#e2a12d" />
        <circle cx="14" cy="17" r="7" fill="#fff0a0" stroke="#d48d23" />
        <path d="M20 17l13 15M33 17L20 32" stroke="#c83227" strokeWidth="5" />
      </>
    ),
  },
  { name: 'Sombras', icon: <path d="M8 13a10 10 0 1 1 20 0 10 10 0 1 1-20 0M18 23v8M9 32h18" fill="#c6e6fa" stroke="#397fb1" strokeWidth="3" /> },
  { name: 'Recortar vista', icon: <path d="M8 8v22h9M2 14h32M13 21h15M28 5v26" stroke="#3974a4" strokeWidth="4" /> },
  {
    name: 'Mostrar recorte',
    icon: (
      <>
        <path d="M9 8v23M2 14h20M13 21h13v10" stroke="#3974a4" strokeWidth="4" />
        <circle cx="27" cy="9" r="6" fill="#f4d24d" stroke="#d69a25" />
      </>
    ),
  },
  { name: 'Ocultar temporalmente', icon: <path d="M2 9l7 12q5 8 10 0 6 8 11 0l3-7-14-4M9 21q5-5 10 0 6-5 11 0" /> },
  { name: 'Mostrar ocultos', icon: <path d="M18 8a7 7 0 0 0-4 13v5h8v-5a7 7 0 0 0-4-13zM15 31h6" fill="#c6e6fa" stroke="#397fb1" /> },
  { name: 'Propiedades temporales', icon: <path d="M3 6h28v23H3zM17 19h16v12H17z" fill="#ddd" strokeDasharray="5 2" stroke="#333" /> },
  {
    name: 'Modelo analítico',
    icon: (
      <>
        <path d="M3 13h26v18H3zM10 13v18M19 6v25M3 21h26" stroke="#70402e" strokeWidth="3" />
        <circle cx="27" cy="9" r="6" fill="#f4d24d" stroke="#d69a25" />
      </>
    ),
  },
  { name: 'Restricciones', icon: <path d="M2 7h31M5 3v8M30 3v27H7M13 24l11-10M20 20h10v10H20z" strokeWidth="2.5" /> },
];

function ViewControlBar() {
  return (
    <div className="flex items-center shrink-0 h-3 bg-[#f0f0f0] text-[#222]">
      <button className="w-[53px] whitespace-nowrap">1 : 250</button>
      <div className="flex gap-[2px]">
        {viewControls.map((control) => (
          <ToolButton key={control.name} name={control.name}>
            <Icon>{control.icon}</Icon>
          </ToolButton>
        ))}
      </div>
      <button aria-label="Desplazar a la izquierda" className="pl-1"><Chevron dir="left" /></button>
      <div className="flex grow justify-center pl-[98px]">
        <div className="w-[11px] h-[10px] bg-[#cdcdcd]" />
      </div>
    </div>
  );
}

export default function App() {
  return (
    <div className="flex flex-col h-screen pb-[3px] pl-[2px] overflow-hidden bg-[#c8c8c8] font-['Roboto',sans-serif] text-[8px] leading-3">
      <MenuTabs />
      <Ribbon />
      <OptionsBar />
      <div className="flex grow min-h-0">
        <aside className="flex flex-col shrink-0 w-[199px] border-r-2 border-[#dcdcdc]">
          <PropertiesPalette />
          <ProjectBrowser />
        </aside>
        <main className="flex flex-col grow min-w-0">
          <DocTabs />
          <FloorPlan />
          <ViewControlBar />
        </main>
      </div>
    </div>
  );
}
